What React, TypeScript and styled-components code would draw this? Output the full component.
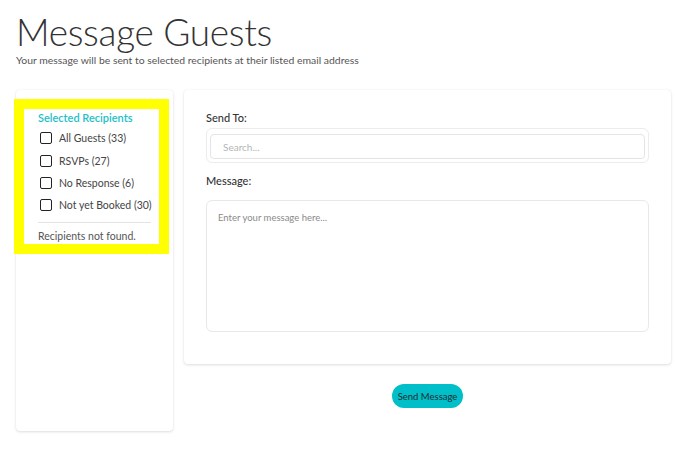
import React from "react";
import styled, { createGlobalStyle } from "styled-components";

const GlobalStyle = createGlobalStyle`
  html, body {
    margin: 0;
    padding: 0;
    background: #ffffff;
    font-family: Lato, "Noto Sans", sans-serif;
    color: #333;
  }
  * { box-sizing: border-box; }
`;

const Page = styled.main`
  width: 688px;
  height: 462px;
  padding: 11px 17px 0 16px;
  overflow: hidden;
`;

const Title = styled.h1`
  margin: 0;
  font-size: 37px;
  line-height: 42px;
  font-weight: 300;
  color: #333;
  letter-spacing: -0.3px;
`;

const Subtitle = styled.p`
  margin: 0;
  font-size: 10.4px;
  line-height: 14px;
  color: #555;
`;

const Columns = styled.div`
  display: flex;
  gap: 11px;
  margin-top: 23px;
  align-items: flex-start;
`;

const Card = styled.section<{ $width: number; $height: number }>`
  width: ${(p) => p.$width}px;
  height: ${(p) => p.$height}px;
  background: #fff;
  border-radius: 4px;
  box-shadow: 0 1px 3px rgba(0, 0, 0, 0.13), 0 0 1px rgba(0, 0, 0, 0.08);
`;

const LeftCard = styled(Card)`
  padding-top: 9px;
`;

const Highlight = styled.div`
  width: 155px;
  margin-left: -2px;
  border: 10px solid #ffff00;
  padding: 2px 8px 0 14px;
  height: 155px;
  display: flex;
  flex-direction: column;
`;

const GroupTitle = styled.div`
  color: #1cc0c8;
  font-size: 11px;
  font-weight: 600;
  line-height: 14px;
  margin-bottom: 2px;
`;

const CheckRow = styled.label`
  display: flex;
  align-items: center;
  height: 22.4px;
  padding-left: 2px;
  font-size: 10.5px;
  color: #444;
  gap: 7px;
  white-space: nowrap;
`;

const Box = styled.span`
  width: 12px;
  height: 12px;
  border: 1.5px solid #222;
  border-radius: 2px;
  flex: none;
`;

const Divider = styled.hr`
  border: none;
  border-top: 1px solid #e4e4e4;
  margin: 5px 0 0 0;
  width: 113px;
`;

const Empty = styled.div`
  font-size: 10.5px;
  color: #555;
  line-height: 14px;
  margin-top: 6px;
`;

const RightColumn = styled.div`
  display: flex;
  flex-direction: column;
  align-items: center;
`;

const RightCard = styled(Card)`
  padding: 21px 22px 0 22px;
  display: flex;
  flex-direction: column;
`;

const FieldLabel = styled.div`
  font-size: 11px;
  font-weight: 500;
  color: #333;
  line-height: 14px;
  margin-bottom: 3px;
`;

const SearchWrap = styled.div`
  height: 35px;
  border: 1px solid #ececec;
  border-radius: 6px;
  padding: 5px 3px 3px 3px;
  margin-bottom: 11px;
`;

const SearchInput = styled.input`
  width: 100%;
  height: 25px;
  border: 1px solid #e4e4e4;
  border-radius: 4px;
  padding: 0 12px;
  font-family: inherit;
  font-size: 10px;
  outline: none;
  &::placeholder { color: #b5b5b5; }
`;

const MessageArea = styled.textarea`
  width: 100%;
  height: 132px;
  margin-top: 9px;
  border: 1px solid #e8e8e8;
  border-radius: 6px;
  padding: 11px 11px;
  font-family: inherit;
  font-size: 9.5px;
  resize: none;
  outline: none;
  &::placeholder { color: #8a8a8a; }
`;

const SendButton = styled.button`
  margin-top: 20px;
  height: 24px;
  padding: 0 6px;
  border: none;
  border-radius: 12px;
  background: #00bfc8;
  color: #1f2d33;
  font-family: inherit;
  font-size: 9.5px;
  cursor: pointer;
`;

const recipients = [
  "All Guests (33)",
  "RSVPs (27)",
  "No Response (6)",
  "Not yet Booked (30)",
];

export default function App() {
  return (
    <>
      <GlobalStyle />
      <Page>
        <Title>Message Guests</Title>
        <Subtitle>
          Your message will be sent to selected recipients at their listed email address
        </Subtitle>
        <Columns>
          <LeftCard $width={157} $height={341}>
            <Highlight>
              <GroupTitle>Selected Recipients</GroupTitle>
              {recipients.map((r) => (
                <CheckRow key={r}>
                  <Box />
                  {r}
                </CheckRow>
              ))}
              <Divider />
              <Empty>Recipients not found.</Empty>
            </Highlight>
          </LeftCard>
          <RightColumn>
            <RightCard $width={487} $height={274}>
              <FieldLabel>Send To:</FieldLabel>
              <SearchWrap>
                <SearchInput placeholder="Search..." />
              </SearchWrap>
              <FieldLabel>Message:</FieldLabel>
              <MessageArea placeholder="Enter your message here..." />
            </RightCard>
            <SendButton>Send Message</SendButton>
          </RightColumn>
        </Columns>
      </Page>
    </>
  );
}
